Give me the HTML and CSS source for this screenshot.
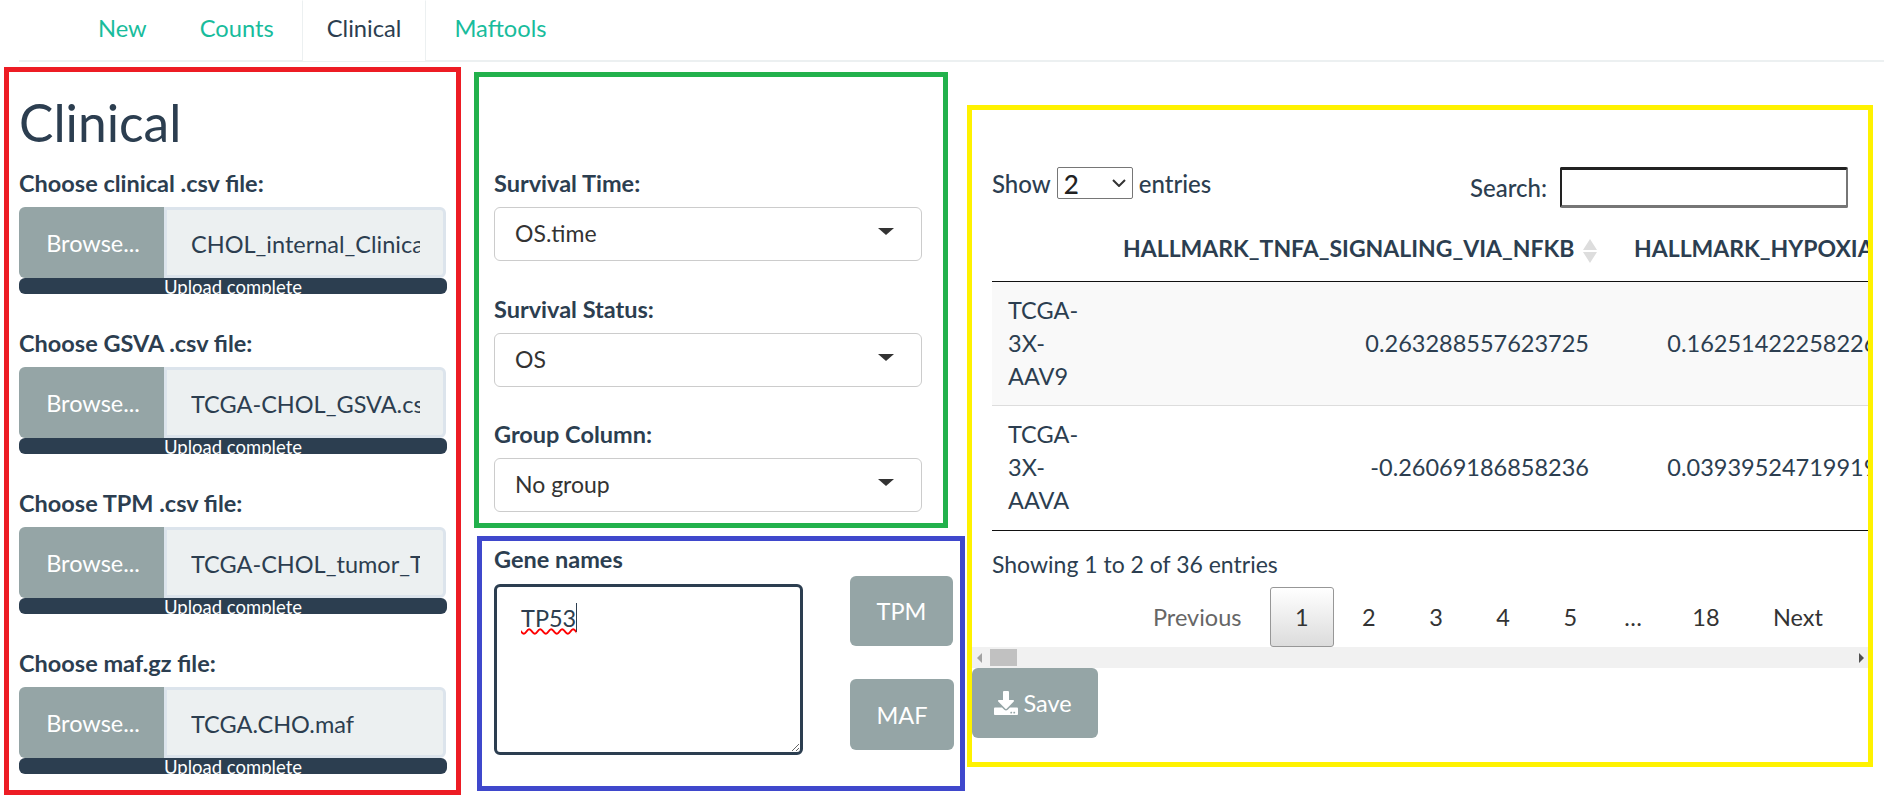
FILE: index.html
```html
<!DOCTYPE html>
<html lang="en">
<head>
    <meta charset="UTF-8">
    <title>Clinical</title>
    <link rel="stylesheet" href="styles.css">
</head>
<body>
    <ul class="tabs">
        <li><a href="#">New</a></li>
        <li><a href="#">Counts</a></li>
        <li class="active"><a href="#">Clinical</a></li>
        <li><a href="#">Maftools</a></li>
    </ul>

    <div class="page">
        <div class="box box-red">
            <h2>Clinical</h2>

            <div class="file-group">
                <label>Choose clinical .csv file:</label>
                <div class="file-row">
                    <span class="browse">Browse...</span>
                    <input type="text" readonly value="CHOL_internal_Clinical.csv">
                </div>
                <div class="progress">Upload complete</div>
            </div>

            <div class="file-group">
                <label>Choose GSVA .csv file:</label>
                <div class="file-row">
                    <span class="browse">Browse...</span>
                    <input type="text" readonly value="TCGA-CHOL_GSVA.csv">
                </div>
                <div class="progress">Upload complete</div>
            </div>

            <div class="file-group">
                <label>Choose TPM .csv file:</label>
                <div class="file-row">
                    <span class="browse">Browse...</span>
                    <input type="text" readonly value="TCGA-CHOL_tumor_TPM.csv">
                </div>
                <div class="progress">Upload complete</div>
            </div>

            <div class="file-group">
                <label>Choose maf.gz file:</label>
                <div class="file-row">
                    <span class="browse">Browse...</span>
                    <input type="text" readonly value="TCGA.CHO.maf">
                </div>
                <div class="progress">Upload complete</div>
            </div>
        </div>

        <div class="middle">
            <div class="box box-green">
                <div class="select-group">
                    <label>Survival Time:</label>
                    <div class="select-box">OS.time<span class="caret"></span></div>
                </div>
                <div class="select-group">
                    <label>Survival Status:</label>
                    <div class="select-box">OS<span class="caret"></span></div>
                </div>
                <div class="select-group">
                    <label>Group Column:</label>
                    <div class="select-box">No group<span class="caret"></span></div>
                </div>
            </div>

            <div class="box box-blue">
                <div class="gene-col">
                    <label>Gene names</label>
                    <div class="gene-input"><span class="gene-text">TP53</span></div>
                </div>
                <div class="gene-buttons">
                    <a class="btn btn-tpm" href="#">TPM</a>
                    <a class="btn btn-maf" href="#">MAF</a>
                </div>
            </div>
        </div>

        <div class="box box-yellow">
            <div class="dt-wrap">
                <div class="dt-top">
                    <div class="dt-length">
                        Show
                        <select>
                            <option>2</option>
                            <option>10</option>
                        </select>
                        entries
                    </div>
                    <div class="dt-filter">
                        Search:
                        <input type="text">
                    </div>
                </div>

                <div class="dt-scroll">
                    <table class="dt-table">
                        <colgroup>
                            <col class="col-id">
                            <col class="col-a">
                            <col class="col-b">
                        </colgroup>
                        <thead>
                            <tr>
                                <th></th>
                                <th>
                                    HALLMARK_TNFA_SIGNALING_VIA_NFKB
                                    <svg class="sort" viewBox="0 0 14 24"><path d="M7 0l7 11H0zM7 24L0 13h14z"/></svg>
                                </th>
                                <th>HALLMARK_HYPOXIA</th>
                            </tr>
                        </thead>
                        <tbody>
                            <tr class="odd">
                                <td>TCGA-<br>3X-<br>AAV9</td>
                                <td class="num">0.263288557623725</td>
                                <td class="num">0.162514222582264</td>
                            </tr>
                            <tr>
                                <td>TCGA-<br>3X-<br>AAVA</td>
                                <td class="num">-0.26069186858236</td>
                                <td class="num">0.039395247199191</td>
                            </tr>
                        </tbody>
                    </table>
                </div>

                <div class="dt-info">Showing 1 to 2 of 36 entries</div>

                <div class="dt-pages">
                    <a class="page-btn disabled" href="#">Previous</a>
                    <a class="page-btn current" href="#">1</a>
                    <a class="page-btn" href="#">2</a>
                    <a class="page-btn" href="#">3</a>
                    <a class="page-btn" href="#">4</a>
                    <a class="page-btn" href="#">5</a>
                    <span class="page-dots">…</span>
                    <a class="page-btn" href="#">18</a>
                    <a class="page-btn" href="#">Next</a>
                </div>
            </div>

            <div class="scrollbar">
                <span class="arrow-left"></span>
                <span class="thumb"></span>
                <span class="arrow-right"></span>
            </div>

            <a class="btn btn-save" href="#">
                <svg class="save-icon" viewBox="0 0 512 512"><path d="M216 0h80c13.3 0 24 10.7 24 24v168h87.7c17.8 0 26.7 21.5 14.1 34.1L269.7 378.3c-7.5 7.5-19.8 7.5-27.3 0L90.1 226.1c-12.6-12.6-3.7-34.1 14.1-34.1H192V24c0-13.3 10.7-24 24-24zm296 376v112c0 13.3-10.7 24-24 24H24c-13.3 0-24-10.7-24-24V376c0-13.3 10.7-24 24-24h146.7l49 49c20.1 20.1 52.5 20.1 72.6 0l49-49H488c13.3 0 24 10.7 24 24zm-124 88c0-11-9-20-20-20s-20 9-20 20 9 20 20 20 20-9 20-20zm64 0c0-11-9-20-20-20s-20 9-20 20 9 20 20 20 20-9 20-20z"/></svg>
                Save
            </a>
        </div>
    </div>
</body>
</html>
```
FILE: styles.css
```css
* {
    box-sizing: border-box;
}
body {
    margin: 0;
    background-color: #fff;
    color: #2c3e50;
    font-family: Lato, "Open Sans", sans-serif;
    font-size: 23.5px;
    line-height: 30px;
}
a {
    text-decoration: none;
}
label {
    display: block;
    height: 30px;
    margin-bottom: 10px;
    font-weight: bold;
    line-height: 32px;
}

/* tabs */
.tabs {
    display: flex;
    height: 62px;
    margin: 0 0 0 19px;
    padding: 0 0 0 54px;
    list-style: none;
    border-bottom: 2px solid #ecf0f1;
    font-size: 23.7px;
}
.tabs li {
    margin-right: 3px;
}
.tabs a {
    display: block;
    height: 62px;
    padding: 12px 24px 0;
    color: #18bc9c;
    border: 1px solid transparent;
}
.tabs .active a {
    color: #2c3e50;
    background-color: #fff;
    border-color: transparent #ecf0f1 #ecf0f1;
}

.page {
    display: flex;
    align-items: flex-start;
}

/* coloured frames */
.box {
    border-style: solid;
    border-width: 5px;
}
.box-red {
    width: 457px;
    height: 728px;
    margin: 5px 0 0 4px;
    padding: 0 10px;
    border-color: #ed1c24;
}
.middle {
    width: 491px;
    margin: 10px 0 0 13px;
}
.box-green {
    width: 474px;
    height: 456px;
    padding: 90px 0 0 15px;
    border-color: #22b14c;
}
.box-blue {
    display: flex;
    width: 488px;
    height: 255px;
    margin: 8px 0 0 3px;
    padding: 3px 0 0 12px;
    border-color: #3f48cc;
}
.box-yellow {
    width: 906px;
    height: 662px;
    margin: 43px 0 0 2px;
    border-color: #fff200;
}

/* file inputs */
h2 {
    margin: 25px 0 20px;
    font-size: 51.5px;
    font-weight: normal;
    line-height: 50px;
}
.file-group {
    margin-bottom: 33px;
}
.file-row {
    display: flex;
    width: 427px;
    height: 71px;
}
.browse {
    width: 145px;
    padding-left: 3px;
    color: #fff;
    text-align: center;
    line-height: 73px;
    background-color: #95a5a6;
    border-radius: 6px 0 0 6px;
}
.file-row input {
    flex: 1;
    min-width: 0;
    padding: 2px 23px 0 24px;
    color: #2c3e50;
    font: inherit;
    background-color: #ecf0f1;
    border: 3px solid #dce4ec;
    border-radius: 0 6px 6px 0;
    outline: none;
}
.progress {
    width: 428px;
    height: 16px;
    color: #fff;
    font-size: 18.5px;
    line-height: 18px;
    text-align: center;
    background-color: #2c3e50;
    border-radius: 6px;
}

/* selects */
.select-group {
    margin-bottom: 31.5px;
}
.select-box {
    display: flex;
    align-items: center;
    justify-content: space-between;
    width: 428px;
    height: 54px;
    padding: 0 27px 2px 20px;
    color: #333;
    font-size: 23px;
    background-color: #fff;
    border: 1px solid #ccc;
    border-radius: 6px;
}
.caret {
    width: 0;
    height: 0;
    margin-top: -3px;
    border-top: 7px solid #333;
    border-left: 8px solid transparent;
    border-right: 8px solid transparent;
}

/* gene names */
.gene-col {
    width: 309px;
}
.gene-col label {
    line-height: 30px;
}
.gene-input {
    height: 171px;
    padding: 16px 24px;
    overflow: auto;
    resize: vertical;
    background-color: #fff;
    border: 3px solid #2c3e50;
    border-radius: 6px;
}
.gene-text {
    display: inline-block;
    height: 29px;
    border-right: 1px solid #2c3e50;
    text-decoration: underline wavy #f00 1.5px;
}
.gene-buttons {
    margin: 32px 0 0 47px;
}
.btn {
    display: flex;
    align-items: center;
    justify-content: center;
    color: #fff;
    background-color: #95a5a6;
    border-radius: 6px;
}
.btn-tpm {
    width: 103px;
    height: 70px;
    margin-bottom: 33px;
}
.btn-maf {
    width: 104px;
    height: 71px;
}

/* data table */
.dt-wrap {
    padding-left: 20px;
}
.dt-top {
    display: flex;
    justify-content: space-between;
    align-items: flex-start;
    padding: 57px 20px 0 0;
}
.dt-length {
    display: flex;
    align-items: center;
    gap: 6px;
    height: 32px;
    margin-top: 1px;
    font-size: 24px;
    font-weight: 500;
}
.dt-length select {
    width: 76px;
    height: 32px;
    margin-top: -2px;
    padding-left: 6px;
    color: #222;
    font: inherit;
    font-size: 26px;
    line-height: normal;
    appearance: none;
    background: #fff url("data:image/svg+xml,%3Csvg xmlns='http://www.w3.org/2000/svg' width='14' height='8'%3E%3Cpath d='M1 1l6 6 6-6' fill='none' stroke='%23333' stroke-width='2'/%3E%3C/svg%3E") no-repeat right 6px center;
    border: 1px solid #767676;
    border-radius: 2px;
}
.dt-filter {
    display: flex;
    align-items: center;
    gap: 13px;
    font-size: 24px;
    font-weight: 500;
    line-height: 32px;
}
.dt-filter input {
    width: 288px;
    height: 41px;
    background-color: #fff;
    border-style: solid;
    border-width: 3px 2px;
    border-color: #222 #767676 #767676 #222;
    border-radius: 2px;
}
.dt-scroll {
    overflow: hidden;
}
.dt-table {
    width: 928px;
    table-layout: fixed;
    border-collapse: separate;
    border-spacing: 0;
}
.col-id {
    width: 115px;
}
.col-a {
    width: 511px;
}
.col-b {
    width: 302px;
}
.dt-table th {
    padding: 25px 0 18px 16px;
    font-size: 23px;
    text-align: left;
    white-space: nowrap;
    color: #2c3e50;
    border-bottom: 1px solid #111;
}
.sort {
    width: 14px;
    height: 24px;
    margin-left: 3px;
    vertical-align: middle;
    fill: #ddd;
}
.dt-table td {
    padding: 12px 16px;
    line-height: 33px;
    border-bottom: 1px solid #ddd;
}
.dt-table td.num {
    padding-right: 29px;
    text-align: right;
    white-space: nowrap;
}
.dt-table tr:last-child td {
    padding-bottom: 13px;
    border-bottom-color: #111;
}
.dt-table .odd td {
    background-color: #f9f9f9;
}
.dt-info {
    margin-top: 18px;
    font-size: 23px;
}
.dt-pages {
    display: flex;
    justify-content: flex-end;
    align-items: center;
    height: 60px;
    margin-top: 8px;
    padding-right: 20px;
}
.page-btn {
    display: block;
    height: 60px;
    margin-left: 3.5px;
    padding: 14px 24px 0;
    color: #333;
    border: 1px solid transparent;
    border-radius: 3px;
}
.page-btn.disabled {
    color: #666;
}
.page-btn.current {
    background: linear-gradient(to bottom, #fff 0%, #dcdcdc 100%);
    border-color: #979797;
}
.page-dots {
    padding: 0 22px;
    color: #333;
}

/* horizontal scrollbar */
.scrollbar {
    display: flex;
    align-items: center;
    height: 21px;
    padding: 0 4px 0 5px;
    background-color: #f1f1f1;
}
.arrow-left,
.arrow-right {
    width: 0;
    height: 0;
    border-top: 5px solid transparent;
    border-bottom: 5px solid transparent;
}
.arrow-left {
    border-right: 5px solid #a3a3a3;
}
.arrow-right {
    margin-left: auto;
    border-left: 5px solid #505050;
}
.thumb {
    width: 27px;
    height: 17px;
    margin-left: 8px;
    background-color: #c1c1c1;
}
.btn-save {
    gap: 5px;
    width: 126px;
    height: 70px;
    padding-right: 4px;
}
.save-icon {
    width: 24px;
    height: 24px;
    fill: #fff;
}
```
